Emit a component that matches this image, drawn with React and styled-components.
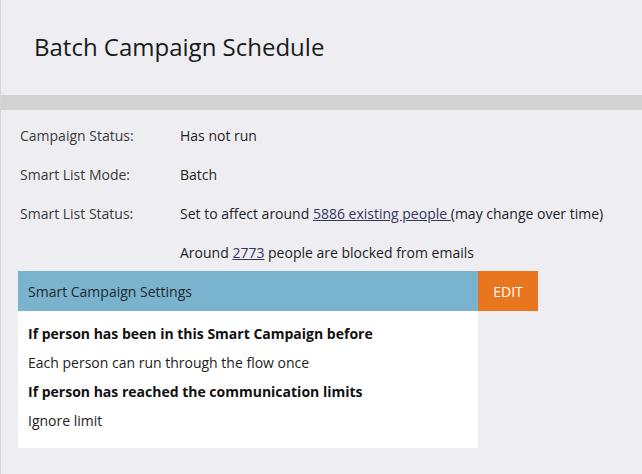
import React from 'react'
import styled, { createGlobalStyle } from 'styled-components'

const GlobalStyle = createGlobalStyle`
    html, body {
        margin: 0;
        padding: 0;
        background: #ededf2;
    }
    body {
        font-family: "Open Sans", "Liberation Sans", sans-serif;
        font-size: 14px;
        color: #222;
    }
`

const Page = styled.div`
    width: 642px;
    height: 474px;
    box-sizing: border-box;
    border-left: 1px solid #d6d6d9;
    background: #ededf2;
    overflow: hidden;
`

const Header = styled.div`
    height: 95px;
    display: flex;
    align-items: center;
    padding-left: 33px;
    box-sizing: border-box;
`

const Title = styled.h1`
    margin: 0;
    font-size: 24px;
    font-weight: 400;
    color: #1a1a1a;
    padding-bottom: 2px;
`

const Divider = styled.div`
    height: 15px;
    background: #d3d3d3;
`

const Details = styled.div`
    padding: 6px 0 0 19px;
`

const Row = styled.div`
    display: flex;
    line-height: 39px;
    height: ${(p) => (p.last ? '38px' : '39px')};
`

const Label = styled.div`
    width: 160px;
    color: #3a3a3a;
`

const Value = styled.div`
    color: #1e1e1e;
`

const Link = styled.a`
    color: #35355e;
    text-decoration: underline;
    cursor: pointer;
`

const Panel = styled.div`
    margin-left: 17px;
    display: flex;
    align-items: flex-start;
`

const Card = styled.div`
    width: 460px;
    background: #fff;
`

const CardHeader = styled.div`
    height: 40px;
    background: #7ab3cd;
    display: flex;
    align-items: center;
    padding-left: 10px;
    color: #1f2a30;
`

const CardBody = styled.div`
    padding: 8px 10px 13px;
`

const Line = styled.div`
    line-height: 29px;
    font-weight: ${(p) => (p.bold ? 700 : 400)};
    color: ${(p) => (p.bold ? '#111' : '#222')};
`

const EditButton = styled.button`
    width: 60px;
    height: 40px;
    border: none;
    background: #e8761e;
    color: #fff;
    font-family: inherit;
    font-size: 14px;
    padding: 0;
    cursor: pointer;
`

const App = () => {
    return (
        <Page>
            <GlobalStyle />
            <Header>
                <Title>Batch Campaign Schedule</Title>
            </Header>
            <Divider />
            <Details>
                <Row>
                    <Label>Campaign Status:</Label>
                    <Value>Has not run</Value>
                </Row>
                <Row>
                    <Label>Smart List Mode:</Label>
                    <Value>Batch</Value>
                </Row>
                <Row>
                    <Label>Smart List Status:</Label>
                    <Value>Set to affect around <Link>5886 existing people </Link>(may change over time)</Value>
                </Row>
                <Row last>
                    <Label />
                    <Value>Around <Link>2773</Link> people are blocked from emails</Value>
                </Row>
            </Details>
            <Panel>
                <Card>
                    <CardHeader>Smart Campaign Settings</CardHeader>
                    <CardBody>
                        <Line bold>If person has been in this Smart Campaign before</Line>
                        <Line>Each person can run through the flow once</Line>
                        <Line bold>If person has reached the communication limits</Line>
                        <Line>Ignore limit</Line>
                    </CardBody>
                </Card>
                <EditButton>EDIT</EditButton>
            </Panel>
        </Page>
    )
}

export default App
